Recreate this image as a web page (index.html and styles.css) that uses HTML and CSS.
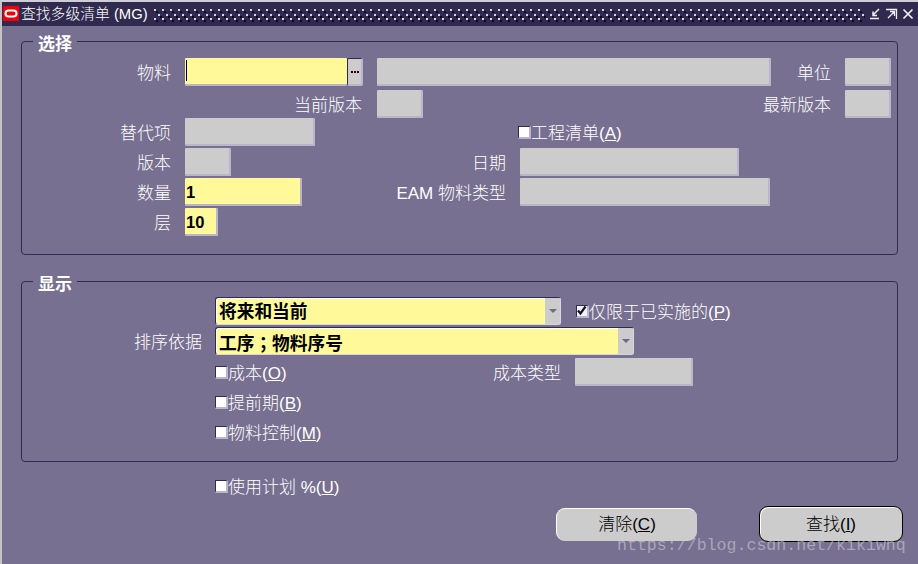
FILE: index.html
```html
<!DOCTYPE html>
<html lang="zh-CN">
<head>
<meta charset="utf-8">
<title>查找多级清单 (MG)</title>
<link rel="stylesheet" href="styles.css">
</head>
<body>
<div class="window">
  <header class="titlebar">
    <svg class="logo" width="16" height="15" viewBox="0 0 16 15"><rect width="16" height="15" fill="#f4000a"/><rect x="2.5" y="4.5" width="11" height="6" rx="3" fill="none" stroke="#fff" stroke-width="2"/></svg>
    <span class="title">查找多级清单 (MG)</span>
    <svg class="grip" height="14"><defs><pattern id="dots" width="8" height="9" patternUnits="userSpaceOnUse"><rect x="0" y="0" width="2" height="2" fill="#d8d6e2"/><rect x="2" y="2" width="2" height="2" fill="#0c0a20"/><rect x="4" y="5" width="2" height="2" fill="#d8d6e2"/><rect x="6" y="7" width="2" height="2" fill="#0c0a20"/></pattern></defs><rect width="100%" height="14" fill="url(#dots)"/></svg>
    <div class="winbtns">
      <svg width="12" height="12" viewBox="0 0 12 12"><path d="M9 1L3 7M3 3.5V7.5H7M0 10.500H9" fill="none" stroke="#f2f0f6" stroke-width="1.500"/></svg>
      <svg width="12" height="12" viewBox="0 0 12 12"><path d="M0 1.500H10.500V11M2 10L8 4M4 3.500H8.500V8" fill="none" stroke="#f2f0f6" stroke-width="1.300"/></svg>
      <svg width="12" height="12" viewBox="0 0 12 12"><path d="M1.500 1.500L10.500 10.500M10.500 1.500L1.500 10.500" fill="none" stroke="#f2f0f6" stroke-width="1.700"/></svg>
    </div>
  </header>

  <fieldset class="panel panel-select">
    <legend>选择</legend>
    <div class="row r32">
      <label class="lab l163">物料</label>
      <div class="field yellow f162 first"><span class="caret"></span></div>
      <div class="lov"><i></i><i></i><i></i></div>
      <div class="field f394 gap-14"></div>
      <label class="lab l74">单位</label>
      <div class="field f46"></div>
    </div>
    <div class="row r28">
      <label class="lab l355">当前版本</label>
      <div class="field f46"></div>
      <label class="lab l422">最新版本</label>
      <div class="field f46"></div>
    </div>
    <div class="row r30">
      <label class="lab l163">替代项</label>
      <div class="field f130"></div>
      <label class="check gap-203"><span class="box"></span>工程清单(<u>A</u>)</label>
    </div>
    <div class="row r30">
      <label class="lab l163">版本</label>
      <div class="field f46"></div>
      <label class="lab l289">日期</label>
      <div class="field f219"></div>
    </div>
    <div class="row r30">
      <label class="lab l163">数量</label>
      <div class="field yellow f117">1</div>
      <label class="lab l218">EAM 物料类型</label>
      <div class="field f250"></div>
    </div>
    <div class="row r28">
      <label class="lab l163">层</label>
      <div class="field yellow f33">10</div>
    </div>
  </fieldset>

  <fieldset class="panel panel-display">
    <legend>显示</legend>
    <div class="row r30 indent">
      <div class="select s346"><span class="value">将来和当前</span><span class="arrow"></span></div>
      <label class="check gap-15"><span class="box checked"><svg width="11" height="11" viewBox="0 0 11 11"><path d="M2 5.500L4.500 8.500L9.500 1.500" fill="none" stroke="#14122a" stroke-width="2.200"/></svg></span>仅限于已实施的(<u>P</u>)</label>
    </div>
    <div class="row r31">
      <label class="lab l193">排序依据</label>
      <div class="select s419"><span class="value">工序<span lang="zh-TW" class="punct">；</span>物料序号</span><span class="arrow"></span></div>
    </div>
    <div class="row r30 indent">
      <div class="split">
        <label class="check"><span class="box"></span>成本(<u>O</u>)</label>
        <label class="lab">成本类型</label>
      </div>
      <div class="field f118"></div>
    </div>
    <div class="row r30 indent">
      <label class="check"><span class="box"></span>提前期(<u>B</u>)</label>
    </div>
    <div class="row r28 indent">
      <label class="check"><span class="box"></span>物料控制(<u>M</u>)</label>
    </div>
  </fieldset>

  <div class="row plan">
    <label class="check"><span class="box"></span>使用计划 %(<u>U</u>)</label>
  </div>

  <footer class="actions">
    <button class="btn" type="button">清除(<u>C</u>)</button>
    <button class="btn primary" type="button">查找(<u>I</u>)</button>
  </footer>
  <div class="watermark">https://blog.csdn.net/kikiwhq</div>
</div>
</body>
</html>
```

FILE: styles.css
```css
* { box-sizing: border-box; }
html, body { margin: 0; height: 100%; overflow: hidden; }
body {
  background: #777090;
  color: #fff;
  font: 300 17px/31px "Liberation Sans", "Noto Sans CJK SC", sans-serif;
}
u { text-underline-offset: 1px; }

.window {
  position: relative;
  height: 564px;
  border-left: 2px solid #c4c4c8;
  border-top: 2px solid #cfcdd8;
  background: #777090;
}

.titlebar {
  display: flex;
  align-items: center;
  height: 24px;
  background: #302a4f;
  padding-left: 1px;
}
.logo { flex: none; margin-top: -1px; }
.title { margin-left: 2px; font-size: 14.800px; line-height: 24px; white-space: nowrap; }
.grip { flex: 1; min-width: 0; margin: 3px 0 0 6px; }
.winbtns { display: flex; gap: 4px; margin: 0 4px 0 5px; }
.winbtns svg { display: block; }

.panel {
  width: 877px;
  margin: 3px 0 0 19px;
  padding: 5px 0 18px;
  border: 1px solid #2f2a4f;
  border-radius: 4px;
  min-width: 0;
}
.panel legend {
  margin-left: 11px;
  padding: 7px 5px 0 5px;
  font-size: 17px;
  line-height: 17px;
  font-weight: 700;
}
.panel-display { margin-top: 14px; padding: 4px 0 15px; }

.row { display: flex; align-items: flex-start; }
.r28 { height: 28px; }
.r30 { height: 30px; }
.r31 { height: 31px; }
.r32 { height: 32px; }
.indent { padding-left: 193px; }

.lab { display: block; text-align: right; padding-right: 14px; white-space: nowrap; flex: none; }
.l74 { width: 74px; }
.l163 { width: 163px; }
.l193 { width: 193px; padding-right: 13px; }
.l218 { width: 218px; }
.l289 { width: 289px; }
.l355 { width: 355px; padding-right: 15px; }
.l422 { width: 422px; }

.field {
  flex: none;
  height: 28px;
  background: #cccccc;
  border-right: 2px solid #b9b5ca;
  border-bottom: 2px solid #b9b5ca;
  border-radius: 1px;
  color: #000;
  font-weight: 700;
  font-size: 16.500px;
  line-height: 28px;
  padding-left: 1px;
}
.yellow { background: #fff999; }
.f33 { width: 33px; padding-left: 1px; }
.f46 { width: 46px; }
.f117 { width: 117px; }
.f118 { width: 118px; }
.f130 { width: 130px; }
.f162 { width: 162px; }
.f219 { width: 219px; }
.f250 { width: 250px; }
.f394 { width: 394px; }
.first { border-right: 0; }
.gap-14 { margin-left: 14px; }
.gap-15 { margin-left: 15px; }
.gap-203 { margin-left: 203px; }

.caret { display: block; width: 1px; height: 21px; margin-top: 2px; background: #000; }

.lov {
  flex: none;
  display: flex;
  justify-content: center;
  align-items: center;
  gap: 1px;
  width: 16px;
  height: 28px;
  background: #cccccc;
  border-left: 1px solid #2f2a4f;
  border-top: 1px solid #2f2a4f;
  border-right: 2px solid #b9b5ca;
  border-bottom: 2px solid #b9b5ca;
  border-radius: 2px;
}
.lov i { width: 2px; height: 2px; background: #300; }

.check { display: flex; flex: none; align-items: flex-start; white-space: nowrap; }
.box {
  flex: none;
  width: 13px;
  height: 13px;
  margin: 8px 0 0 0;
  background: #fff;
  border-left: 1px solid #2f2a4f;
  border-top: 1px solid #2f2a4f;
  border-right: 2px solid #b9b5ca;
  border-bottom: 2px solid #b9b5ca;
}
.box svg { display: block; margin: -1px 0 0 -1px; }
.checked { background: #f2f2f4; }

.select {
  flex: none;
  display: flex;
  height: 28px;
  background: #fff999;
  border: 1px solid #2f2a4f;
  border-right-color: #d8d6e2;
  border-bottom-color: #d8d6e2;
  box-shadow: inset 1px 1px 0 #fff;
  border-radius: 3px;
  color: #000;
  font-weight: 700;
  font-size: 17.700px;
  line-height: 28px;
}
.s346 { width: 346px; }
.s419 { width: 419px; }
.value { flex: 1; padding-left: 3px; }
.punct { font-family: "Noto Sans CJK TC", sans-serif; }
.arrow {
  flex: none;
  display: flex;
  width: 15px;
  background: #cccccc;
  border-radius: 0 2px 2px 0;
  justify-content: center;
  align-items: center;
}
.arrow::after {
  content: "";
  border-left: 4px solid transparent;
  border-right: 4px solid transparent;
  border-top: 4px solid #6f6a86;
}

.split { display: flex; justify-content: space-between; width: 360px; flex: none; }

.plan { padding-left: 213px; margin-top: 10px; height: 34px; }

.actions {
  display: flex;
  justify-content: flex-end;
  align-items: center;
  gap: 62px;
  padding-right: 15px;
}
.btn {
  width: 141px;
  height: 33px;
  padding: 0;
  background: #cccccc;
  border: 0;
  border-top: 1px solid #fff;
  border-left: 1px solid #fff;
  border-radius: 9px;
  color: #000;
  font: inherit;
  line-height: 31px;
}
.primary {
  width: 144px;
  height: 36px;
  border: 1px solid #000;
  box-shadow: inset 1px 1px 0 #fff;
}

.watermark {
  position: absolute;
  left: 615px;
  top: 534px;
  font: 16.600px/20px "Liberation Mono", monospace;
  color: rgba(205, 203, 215, .6);
  white-space: nowrap;
}
```
